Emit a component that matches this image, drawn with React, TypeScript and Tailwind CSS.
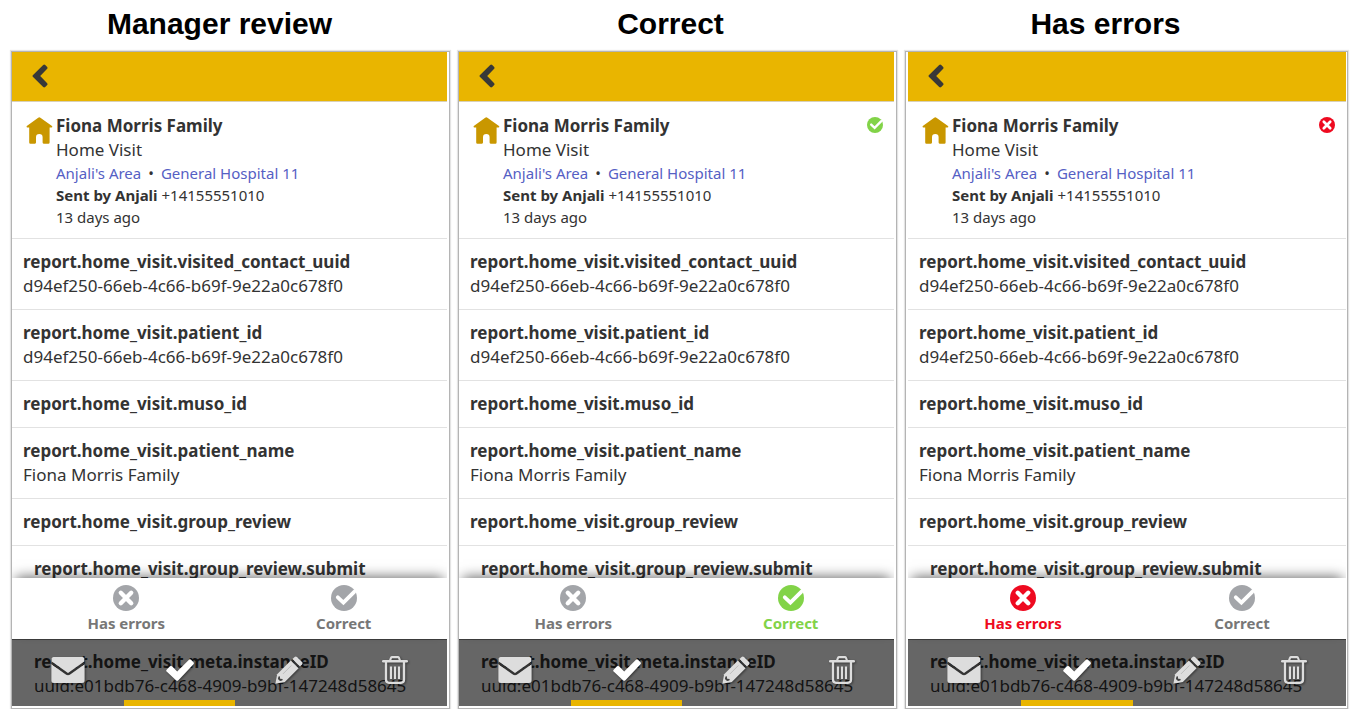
import clsx from "clsx";

type Verdict = "none" | "correct" | "errors";

interface Panel {
  title: string;
  titleInset: string;
  verdict: Verdict;
  inset: string;
}

const panels: Panel[] = [
  { title: "Manager review", titleInset: "pr-[22px]", verdict: "none", inset: "pr-0.5 pb-0.5" },
  { title: "Correct", titleInset: "pr-3.5", verdict: "correct", inset: "pr-0.5 pb-0.5" },
  { title: "Has errors", titleInset: "pr-[42px]", verdict: "errors", inset: "pl-0.5 pr-px pb-0.5" },
];

const fields = [
  { name: "report.home_visit.visited_contact_uuid", value: "d94ef250-66eb-4c66-b69f-9e22a0c678f0" },
  { name: "report.home_visit.patient_id", value: "d94ef250-66eb-4c66-b69f-9e22a0c678f0" },
  { name: "report.home_visit.muso_id" },
  { name: "report.home_visit.patient_name", value: "Fiona Morris Family" },
  { name: "report.home_visit.group_review" },
];

function CrossCircle({ className }: { className: string }) {
  return (
    <svg viewBox="0 0 26 26" className={className} aria-hidden="true">
      <circle cx="13" cy="13" r="13" fill="currentColor" />
      <path d="M7.8 7.8 18.2 18.2M18.2 7.8 7.8 18.2" stroke="white" strokeWidth="4.4" strokeLinecap="round" />
    </svg>
  );
}

function CheckCircle({ className }: { className: string }) {
  return (
    <svg viewBox="0 0 26 26" className={className} aria-hidden="true">
      <circle cx="13" cy="13" r="13" fill="currentColor" />
      <path d="M6.8 12.3 12.4 17.6 23.2 6.8" fill="none" stroke="white" strokeWidth="3.8" strokeLinecap="round" />
    </svg>
  );
}

function HouseIcon() {
  return (
    <svg viewBox="0 0 27 27" className="mt-[3px] h-[27px] w-[27px] shrink-0 text-[#c99700]" aria-hidden="true">
      <path
        d="M12.2.7Q13.3 0 14.4.7L26 8.9Q27 10 25.6 10.4H23.6V25.4Q23.6 26.7 22.4 26.7H17.6Q16.6 26.7 16.6 25.6V20.3A3.3 3.3 0 0 0 10 20.3V25.6Q10 26.7 9 26.7H4.4Q3.2 26.7 3.2 25.4V10.4H1.2Q0 10 .8 8.9Z"
        fill="currentColor"
      />
    </svg>
  );
}

function BackIcon() {
  return (
    <svg viewBox="0 0 16 24" className="h-6 w-4" aria-hidden="true">
      <path d="M11.2.9Q12.2 0 13.2.9L15.2 2.9Q16 3.8 15.2 4.8L8.2 12 15.2 19.2Q16 20.2 15.2 21.1L13.2 23.1Q12.2 24 11.2 23.1L.8 12.8Q.1 12 .8 11.2Z" fill="#383838" />
    </svg>
  );
}

function MailIcon() {
  return (
    <svg viewBox="0 0 34 26" className="h-[26px] w-[34px]" aria-hidden="true">
      <path d="M2.5 0H31.5Q33 0 33.3 1.5V4.4L17 16 .7 4.4V1.5Q1 0 2.5 0Z" fill="#ddd" />
      <path d="M.4 7.2 14.8 17.5Q17 19 19.2 17.5L33.6 7.2V23.5Q33.6 26 31 26H3Q.4 26 .4 23.5Z" fill="#ddd" />
      <path d="M.6 5.8 15 16.2Q17 17.6 19 16.2L33.4 5.8" fill="none" stroke="#333" strokeWidth="1.5" />
    </svg>
  );
}

function CheckIcon() {
  return (
    <svg viewBox="0 0 28 22" className="h-[22px] w-7" aria-hidden="true">
      <path d="M.6 10.8 4 7.3Q5 6.6 6 7.3L11.2 12.5 23 .7Q24 0 25 .7L27.5 3.2Q28.3 4.2 27.5 5.2L12.4 21.2Q11.2 22.2 10 21.2L.6 12.6Q-.2 11.7.6 10.8Z" fill="white" />
    </svg>
  );
}

function PencilIcon() {
  return (
    <svg viewBox="0 0 29 29" className="h-7 w-7" aria-hidden="true">
      <path d="M2.2 18.8 16.4 4.6 24.4 12.6 10.2 26.8.4 28.8Z" fill="#ddd" />
      <path d="M18 3.2 20.3 1Q21.5-.1 22.8 1L28 6.2Q29.1 7.5 28 8.7L25.8 11Z" fill="#ddd" />
      <path d="M17.2 3.8 25.2 11.8" stroke="#333" strokeWidth="1.4" />
      <path d="M3.6 21.2 5 20.9 5.3 23.5 8 23.8 7.6 25.4 5.2 26 3 23.8Z" fill="#444" />
      <path d="M8.2 18.6 17 9.8" stroke="#bbb" strokeWidth="1" />
    </svg>
  );
}

function TrashIcon() {
  return (
    <svg viewBox="0 0 26 28" className="h-7 w-[26px]" fill="none" stroke="#ddd" aria-hidden="true">
      <path d="M8 4.5 9 1.8Q9.3 1.1 10.2 1.1H15.8Q16.7 1.1 17 1.8L18 4.5" strokeWidth="2.1" />
      <path d="M1.2 5.2H24.8" strokeWidth="2.4" strokeLinecap="round" />
      <path d="M4 6V23.6Q4 26.8 7 26.8H19Q22 26.8 22 23.6V6" strokeWidth="2.3" />
      <path d="M9 10.5V23M13 10.5V23M17 10.5V23" strokeWidth="2.2" />
    </svg>
  );
}

const tools = [
  { label: "Message", icon: <MailIcon />, active: false },
  { label: "Review", icon: <CheckIcon />, active: true },
  { label: "Edit", icon: <PencilIcon />, active: false },
  { label: "Delete", icon: <TrashIcon />, active: false },
];

function Summary({ verdict }: { verdict: Verdict }) {
  return (
    <div className="flex gap-[3px] border-b border-[#e2e2e2] pt-3 pr-[11px] pb-2.5 pl-3.5">
      <HouseIcon />
      <div className="min-w-0 flex-1 text-[15px] leading-[22px]">
        <h2 className="text-[17px] leading-6 font-bold">Fiona Morris Family</h2>
        <p className="text-[17px] leading-6">Home Visit</p>
        <p className="flex gap-[7px]">
          <a href="#area" className="text-[#5560c4]">Anjali's Area</a>
          <span>•</span>
          <a href="#hospital" className="text-[#5560c4]">General Hospital 11</a>
        </p>
        <p>
          <b>Sent by Anjali</b> +14155551010
        </p>
        <p>13 days ago</p>
      </div>
      {verdict === "correct" && <CheckCircle className="mt-[3px] h-4 w-4 text-[#82d348]" />}
      {verdict === "errors" && <CrossCircle className="mt-[3px] h-4 w-4 text-[#ee0a20]" />}
    </div>
  );
}

function ReviewCard({ verdict, inset }: { verdict: Verdict; inset: string }) {
  return (
    <article className={clsx("border border-[#b4b4b4] bg-white text-[#333] shadow-[0_0_1px_1px_#e4e4e4]", inset)}>
      <div className="relative overflow-hidden">
        <header className="flex h-[50px] items-center border-b border-[#d8d0b8] bg-[#e9b500] pb-0.5 pl-5">
          <button type="button" aria-label="Back">
            <BackIcon />
          </button>
        </header>
        <Summary verdict={verdict} />
        <dl className="text-[17px] leading-6">
          {fields.map((field) => (
            <div key={field.name} className="border-b border-[#e2e2e2] px-[11px] py-[11px]">
              <dt className="font-bold">{field.name}</dt>
              {field.value && <dd>{field.value}</dd>}
            </div>
          ))}
          <div className="px-[22px] pt-[11px] pb-[69px]">
            <dt className="font-bold">report.home_visit.group_review.submit</dt>
          </div>
          <div className="px-[22px] pb-2">
            <dt className="font-bold">report.home_visit.meta.instanceID</dt>
            <dd>uuid:e01bdb76-c468-4909-b9bf-147248d58645</dd>
          </div>
        </dl>
        <div className="absolute inset-x-0 bottom-0">
          <div className="grid grid-cols-[229fr_207fr] bg-white pt-[7px] pb-1 text-[15px] leading-6 font-bold text-[#777] shadow-[0_-5px_12px_-4px_rgba(0,0,0,0.6)]">
            <button type="button" className={clsx("flex flex-col items-center", verdict === "errors" && "text-[#ee0a20]")}>
              <CrossCircle className={clsx("h-[26px] w-[26px]", verdict !== "errors" && "text-[#a3a5a9]")} />
              Has errors
            </button>
            <button type="button" className={clsx("flex flex-col items-center", verdict === "correct" && "text-[#82d348]")}>
              <CheckCircle className={clsx("h-[26px] w-[26px]", verdict !== "correct" && "text-[#a3a5a9]")} />
              Correct
            </button>
          </div>
          <nav className="grid h-[67px] grid-cols-[112fr_111fr_108fr_104fr] border-t border-black/40 bg-black/60">
            {tools.map((tool) => (
              <button
                key={tool.label}
                type="button"
                aria-label={tool.label}
                className={clsx(
                  "flex items-center justify-center border-b-[6px]",
                  tool.active ? "border-[#e9b500]" : "border-transparent",
                )}
              >
                <span className="drop-shadow-[1px_1px_1px_rgba(0,0,0,0.45)]">{tool.icon}</span>
              </button>
            ))}
          </nav>
        </div>
      </div>
    </article>
  );
}

export default function App() {
  return (
    <main className="grid grid-cols-[439fr_439fr_443fr] gap-2 bg-white px-[11px] font-['Noto_Sans',sans-serif]">
      {panels.map((panel) => (
        <section key={panel.title}>
          <h1
            className={clsx(
              "pt-1 pb-[7px] text-center font-['Liberation_Sans',Arial,sans-serif] text-[30px] leading-10 font-bold text-black",
              panel.titleInset,
            )}
          >
            {panel.title}
          </h1>
          <ReviewCard verdict={panel.verdict} inset={panel.inset} />
        </section>
      ))}
    </main>
  );
}
